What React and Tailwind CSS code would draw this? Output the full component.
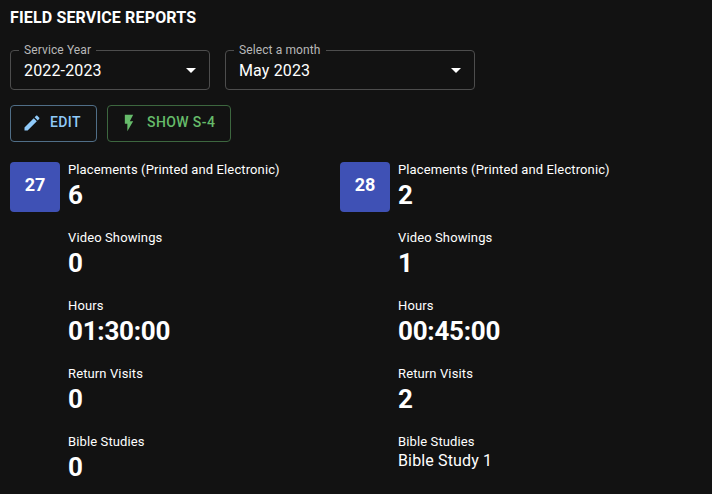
const REPORTS = [
  {
    day: 27,
    entries: [
      ['Placements (Printed and Electronic)', '6'],
      ['Video Showings', '0'],
      ['Hours', '01:30:00'],
      ['Return Visits', '0'],
      ['Bible Studies', '0'],
    ],
  },
  {
    day: 28,
    entries: [
      ['Placements (Printed and Electronic)', '2'],
      ['Video Showings', '1'],
      ['Hours', '00:45:00'],
      ['Return Visits', '2'],
    ],
    studies: ['Bible Study 1'],
  },
];

function SelectField({ label, value, className }) {
  return (
    <fieldset className={`h-[45px] rounded border border-[#4d4d4d] px-2 ${className}`}>
      <legend className="h-[11px] px-[5px] text-[12px] leading-[11px] tracking-[0.11px] text-[#b8b8b8]">
        {label}
      </legend>
      <div className="flex h-[29px] items-center justify-between pl-[5px] text-base leading-[23px] tracking-[0.15px]">
        <span>{value}</span>
        <svg className="-mr-[2px] mb-[2px] size-6" viewBox="0 0 24 24" fill="currentColor">
          <path d="M7 10l5 5 5-5z" />
        </svg>
      </div>
    </fieldset>
  );
}

function OutlinedButton({ icon, className, children }) {
  return (
    <button
      className={`flex h-[37px] items-center whitespace-nowrap rounded border pl-[11px] pb-px text-sm font-medium tracking-[0.4px] ${className}`}
    >
      <svg className="mr-2 size-5 shrink-0" viewBox="0 0 24 24" fill="currentColor">
        <path d={icon} />
      </svg>
      <span className="pb-[2px] leading-[24px]">{children}</span>
    </button>
  );
}

function Report({ day, entries, studies }) {
  return (
    <section className="flex w-[330px] gap-2">
      <div className="flex h-[50px] w-[50px] shrink-0 justify-center rounded bg-[#3f51b5] pt-[11px] text-[18px] font-bold leading-6">
        {day}
      </div>
      <dl>
        {entries.map(([label, value]) => (
          <div key={label} className="h-[68px]">
            <dt className="text-[13px] leading-4 tracking-[0.12px]">{label}</dt>
            <dd className="text-[26px] font-bold leading-[34px] tracking-[-0.25px]">{value}</dd>
          </div>
        ))}
        {studies && (
          <div>
            <dt className="text-[13px] leading-4 tracking-[0.12px]">Bible Studies</dt>
            {studies.map((study) => (
              <dd key={study} className="text-base leading-[22px] tracking-[0.15px]">
                {study}
              </dd>
            ))}
          </div>
        )}
      </dl>
    </section>
  );
}

export default function App() {
  return (
    <main className="h-[494px] w-[712px] overflow-hidden bg-[#121212] px-[10px] pt-[5px] font-[Roboto,'Liberation_Sans',sans-serif] text-white">
      <h1 className="h-10 pt-px text-base font-bold leading-6 tracking-[0.15px]">FIELD SERVICE REPORTS</h1>
      <div className="flex gap-[15px]">
        <SelectField label="Service Year" value="2022-2023" className="w-[200px]" />
        <SelectField label="Select a month" value="May 2023" className="w-[250px]" />
      </div>
      <div className="mt-[15px] flex gap-[10px]">
        <OutlinedButton
          className="w-[87px] border-[#506e87] text-[#90caf9]"
          icon="M3 17.25V21h3.75L17.81 9.94l-3.75-3.75L3 17.25zM20.71 7.04c.39-.39.39-1.02 0-1.41l-2.34-2.34c-.39-.39-1.02-.39-1.41 0l-1.83 1.83 3.75 3.75 1.83-1.83z"
        >
          EDIT
        </OutlinedButton>
        <OutlinedButton className="w-[124px] border-[#3d673f] text-[#66bb6a]" icon="M7 2v11h3v9l7-12h-4l4-8z">
          SHOW S-4
        </OutlinedButton>
      </div>
      <div className="mt-5 flex">
        {REPORTS.map((report) => (
          <Report key={report.day} {...report} />
        ))}
      </div>
    </main>
  );
}
